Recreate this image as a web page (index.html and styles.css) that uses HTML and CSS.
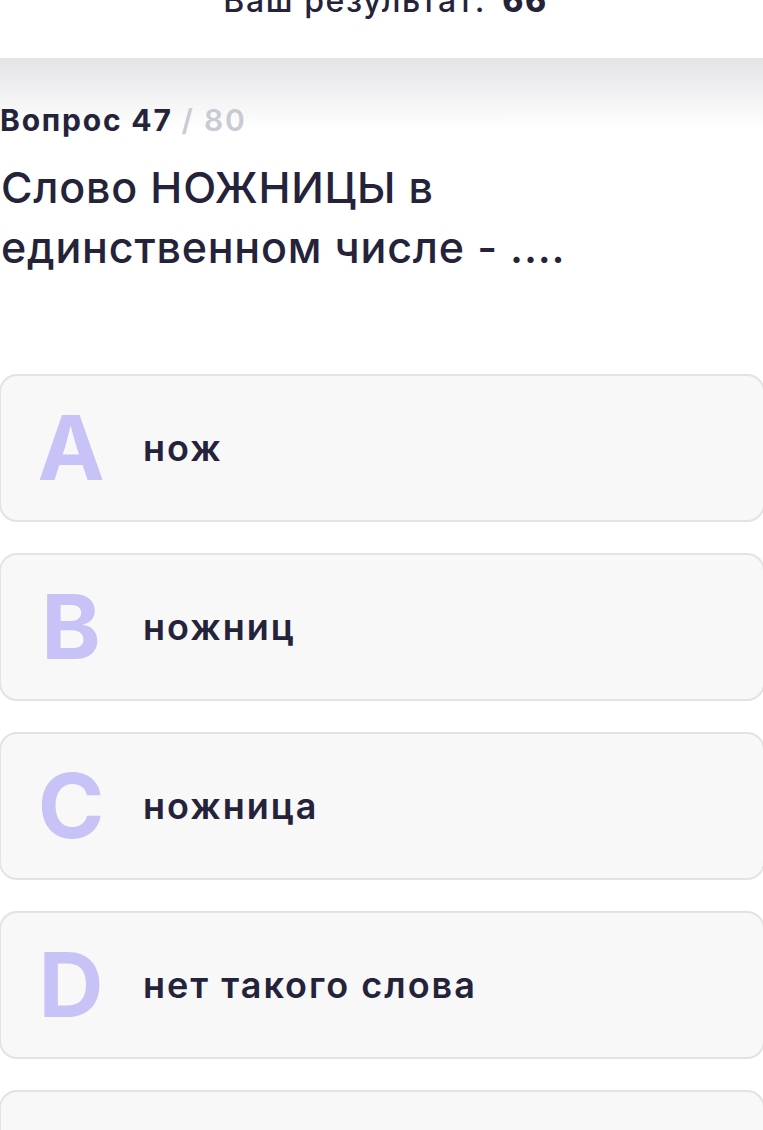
FILE: index.html
```html
<!DOCTYPE html>
<html lang="ru">
<head>
    <meta charset="UTF-8">
    <meta name="viewport" content="width=device-width, initial-scale=1.0">
    <title>Тест</title>
    <link rel="stylesheet" href="styles.css">
</head>
<body>
    <header class="result">
        <div class="result-text">Ваш результат: <b>66</b></div>
    </header>

    <main class="quiz">
        <div class="counter">Вопрос 47 <span class="total">/ 80</span></div>
        <h1 class="question">Слово НОЖНИЦЫ в единственном числе - ....</h1>

        <div class="answers">
            <div class="answer">
                <span class="letter">A</span>
                <span class="answer-text">нож</span>
            </div>
            <div class="answer">
                <span class="letter">B</span>
                <span class="answer-text">ножниц</span>
            </div>
            <div class="answer">
                <span class="letter">C</span>
                <span class="answer-text">ножница</span>
            </div>
            <div class="answer">
                <span class="letter">D</span>
                <span class="answer-text">нет такого слова</span>
            </div>
            <div class="answer"></div>
        </div>
    </main>
</body>
</html>
```

FILE: styles.css
```css
* {
    margin: 0;
    padding: 0;
    box-sizing: border-box;
}

body {
    font-family: Inter, "Noto Sans", sans-serif;
    color: #25233a;
    background: #fff;
    overflow: hidden;
}

.result {
    height: 58px;
    background: #fff;
    display: flex;
    justify-content: center;
    align-items: flex-start;
}

.result-text {
    margin-top: -19px;
    margin-left: 8px;
    font-size: 32px;
    line-height: 40px;
    font-weight: 500;
    letter-spacing: 1.6px;
}

.result-text b {
    font-weight: 800;
    margin-left: 6px;
}

.quiz {
    padding-top: 44px;
    background: linear-gradient(#e4e4e7, #fff 72px);
}

.counter {
    font-size: 30px;
    line-height: 36px;
    font-weight: 700;
    letter-spacing: 1.8px;
}

.total {
    color: #c9cbd4;
    font-weight: 600;
}

.question {
    margin-top: 19px;
    font-size: 43px;
    line-height: 60px;
    font-weight: 500;
    letter-spacing: 0.8px;
    max-width: 600px;
    padding-left: 1px;
}

.answers {
    margin: 97px -2px 0 -1px;
    display: flex;
    flex-direction: column;
    gap: 31px;
}

.answer {
    min-height: 148px;
    border: 2px solid #e3e3e5;
    border-radius: 18px;
    background: #f8f8f9;
    display: flex;
    align-items: center;
    padding-left: 20px;
}

.letter {
    width: 100px;
    text-align: center;
    font-size: 90px;
    line-height: 1;
    font-weight: 700;
    color: #c8c3f6;
}

.answer-text {
    margin-left: 22px;
    font-size: 36px;
    font-weight: 600;
    letter-spacing: 2px;
}
```
